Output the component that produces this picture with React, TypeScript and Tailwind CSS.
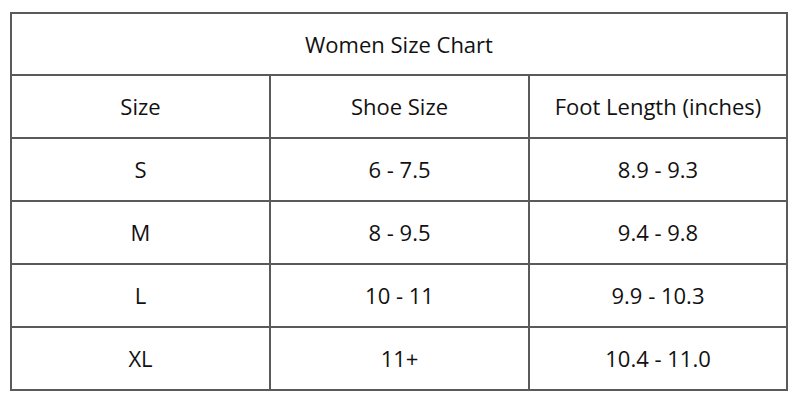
const rows = [
  ["S", "6 - 7.5", "8.9 - 9.3"],
  ["M", "8 - 9.5", "9.4 - 9.8"],
  ["L", "10 - 11", "9.9 - 10.3"],
  ["XL", "11+", "10.4 - 11.0"],
];

export default function App() {
  return (
    <div className="w-[800px] h-[400px] bg-white pl-[10px] pt-[12px]" style={{ fontFamily: '"Open Sans", sans-serif' }}>
      <div className="w-[778px] border-2 border-[#5a5a5a] text-[22px] text-[#111]">
        <div className="h-[60px] flex items-center justify-center">Women Size Chart</div>
        <div className="grid grid-cols-[257px_259px_1fr] h-[63px] border-t-2 border-[#5a5a5a]">
          <div className="flex items-center justify-center">Size</div>
          <div className="flex items-center justify-center border-l-2 border-[#5a5a5a]">Shoe Size</div>
          <div className="flex items-center justify-center border-l-2 border-[#5a5a5a]">Foot Length (inches)</div>
        </div>
        {rows.map((r) => (
          <div key={r[0]} className="grid grid-cols-[257px_259px_1fr] h-[63px] border-t-2 border-[#5a5a5a]">
            <div className="flex items-center justify-center">{r[0]}</div>
            <div className="flex items-center justify-center border-l-2 border-[#5a5a5a]">{r[1]}</div>
            <div className="flex items-center justify-center border-l-2 border-[#5a5a5a]">{r[2]}</div>
          </div>
        ))}
      </div>
    </div>
  );
}
